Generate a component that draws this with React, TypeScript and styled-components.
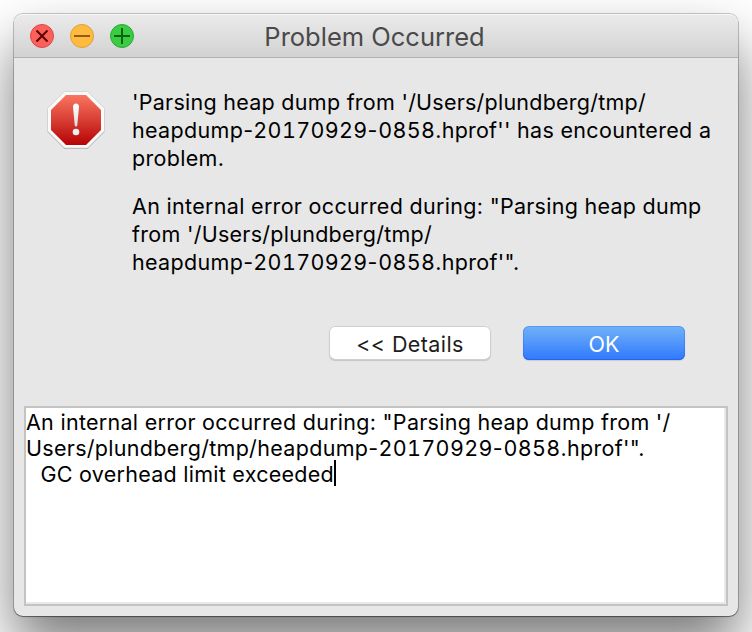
import React from "react";
import styled, { createGlobalStyle } from "styled-components";

const GlobalStyle = createGlobalStyle`
  * { box-sizing: border-box; }
  html, body { margin: 0; width: 752px; height: 632px; overflow: hidden; background: #fff; }
  body {
    font-family: Inter, "Liberation Sans", sans-serif;
    color: #000;
  }
`;

const Desktop = styled.main`
  width: 752px;
  height: 632px;
  padding: 14px;
  overflow: hidden;
`;

const Window = styled.section`
  display: flex;
  flex-direction: column;
  width: 724px;
  height: 602px;
  border-radius: 9px;
  background: #e7e7e7;
  box-shadow: 0 0 0 1px rgba(0, 0, 0, 0.2), 0 1px 1px rgba(0, 0, 0, 0.35),
    0 30px 56px rgba(0, 0, 0, 0.53);
`;

const TitleBar = styled.header`
  display: grid;
  grid-template-columns: 110px 1fr 110px;
  align-items: center;
  height: 44px;
  padding: 0 16px;
  border-radius: 9px 9px 0 0;
  border-bottom: 1px solid #b1b1b1;
  background: linear-gradient(#ebebeb, #d2d2d2);
  box-shadow: inset 0 1px 0 #f6f6f6;
`;

const Controls = styled.nav`
  display: flex;
  gap: 16px;
`;

const Control = styled.button<{ $fill: string; $edge: string; $ink: string }>`
  display: grid;
  place-items: center;
  width: 24px;
  height: 24px;
  padding: 0;
  border: 1px solid ${(p) => p.$edge};
  border-radius: 50%;
  background: ${(p) => p.$fill};
  color: ${(p) => p.$ink};
`;

const Glyph = styled.svg`
  width: 22px;
  height: 22px;
  fill: none;
  stroke: currentColor;
  stroke-width: 2;
`;

const Title = styled.h1`
  margin: 3px 3px 0 0;
  text-align: center;
  white-space: nowrap;
  font-size: 25.5px;
  line-height: 32px;
  font-weight: 400;
  color: #4a4a4a;
`;

const Message = styled.div`
  display: flex;
  align-items: flex-start;
  height: 268px;
  padding: 30px 0 0 32px;
`;

const Icon = styled.svg`
  flex: none;
  width: 60px;
  height: 62px;
  margin-top: 1px;
`;

const Copy = styled.div`
  display: flex;
  flex-direction: column;
  gap: 20px;
  margin-left: 26px;
`;

const Paragraph = styled.p<{ $leading: number }>`
  margin: 0;
  font-size: 21.5px;
  font-weight: 430;
  line-height: ${(p) => p.$leading}px;
`;

const Line = styled.span`
  display: block;
  width: max-content;
  white-space: pre;
`;

const Run = styled.span<{ $track: number }>`
  letter-spacing: ${(p) => p.$track}px;
`;

const Digits = styled(Run)`
  font-variant-numeric: tabular-nums;
`;

const Actions = styled.footer`
  display: flex;
  justify-content: flex-end;
  gap: 32px;
  height: 80px;
  padding-right: 53px;
`;

const Button = styled.button<{ $primary?: boolean }>`
  width: 162px;
  height: 34px;
  padding: 2px 0 0;
  border: 0;
  border-radius: 6px;
  font: 400 21.5px/32px Inter, sans-serif;
  letter-spacing: ${(p) => (p.$primary ? 0 : 0.4)}px;
  color: ${(p) => (p.$primary ? "#fff" : "#1c1c1c")};
  background: ${(p) => (p.$primary ? "linear-gradient(#72b2f8, #2f79fd)" : "#fff")};
  box-shadow: ${(p) =>
    p.$primary
      ? "inset 0 0 0 1px rgba(40,100,240,.35), inset 0 -1px 0 #2a62f0, 0 1px 1px rgba(0,0,0,.12)"
      : "inset 0 0 0 1px #cfcfcf, inset 0 -1px 0 #b4b4b4, 0 1px 1px rgba(0,0,0,.14)"};
`;

const Details = styled.section`
  width: 704px;
  height: 200px;
  margin-left: 10px;
  padding-top: 1px;
  border: 2px solid #c3c3c3;
  background: #fff;
  box-shadow: inset -2px -2px 0 #e9e9e9;
`;

const Caret = styled.i`
  display: inline-block;
  width: 2px;
  height: 26px;
  margin-top: -1px;
  vertical-align: top;
  background: #000;
`;

const DumpName = () => (
  <>
    <Run $track={0.32}>heapdump-</Run>
    <Digits $track={0.33}>20170929</Digits>
    <Run $track={0.8}>-</Run>
    <Digits $track={0.33}>0858</Digits>
  </>
);

export default function App() {
  return (
    <>
      <GlobalStyle />
      <Desktop>
        <Window>
          <TitleBar>
            <Controls>
              <Control $fill="#fc605b" $edge="#df4744" $ink="#5d0503" aria-label="Close">
                <Glyph viewBox="0 0 22 22"><path d="M5.5 5.5l11 11M16.5 5.5l-11 11" /></Glyph>
              </Control>
              <Control $fill="#fdbc40" $edge="#dea034" $ink="#985712" aria-label="Minimize">
                <Glyph viewBox="0 0 22 22"><path d="M3 11h16" /></Glyph>
              </Control>
              <Control $fill="#3bcb44" $edge="#27aa35" $ink="#0b650d" aria-label="Zoom">
                <Glyph viewBox="0 0 22 22"><path d="M3 11h16M11 3v16" /></Glyph>
              </Control>
            </Controls>
            <Title>Problem Occurred</Title>
          </TitleBar>
          <Message>
            <Icon viewBox="0 0 60 62">
              <defs>
                <linearGradient id="red" x1="0" y1="0" x2="0" y2="1">
                  <stop stopColor="#fa7561" />
                  <stop offset=".5" stopColor="#d83e33" />
                  <stop offset="1" stopColor="#b60206" />
                </linearGradient>
                <linearGradient id="mark" x1="0" y1="0" x2="0" y2="1">
                  <stop stopColor="#fff" />
                  <stop offset="1" stopColor="#dedede" />
                </linearGradient>
              </defs>
              <path d="M18.5 4h23l17 17v22l-17 17h-23l-17-17v-22z" fill="#999" opacity=".75" />
              <path d="M18.5 2.5h23l17 17v22.5l-17 17h-23l-17-17v-22.5z" fill="#fafafa" stroke="#cfcfcf" strokeWidth=".8" />
              <path d="M20 6h20l15 15v20L40 56H20L5 41V21z" fill="url(#red)" />
              <path d="M27 18q0-3.5 3-3.5t3 3.5l-1.7 18q-.2 1.6-1.3 1.6t-1.3-1.6z" fill="url(#mark)" />
              <circle cx="30" cy="43" r="3.3" fill="#eee" />
            </Icon>
            <Copy>
              <Paragraph $leading={28}>
                <Line>
                  <Run $track={0.27}>{"'Parsing heap dump from "}</Run>
                  <Run $track={0.23}>{"'/Users/plundberg/tmp/"}</Run>
                </Line>
                <Line>
                  <DumpName />
                  <Run $track={0.22}>{".hprof''"}</Run>
                  <Run $track={0.32}>{" has encountered a"}</Run>
                </Line>
                <Line><Run $track={0.3}>problem.</Run></Line>
              </Paragraph>
              <Paragraph $leading={28}>
                <Line>
                  <Run $track={0.31}>{"An internal error occurred during: "}</Run>
                  <Run $track={0.27}>{'"Parsing heap dump'}</Run>
                </Line>
                <Line>
                  <Run $track={0.3}>{"from "}</Run>
                  <Run $track={0.26}>{"'/Users/plundberg/tmp/"}</Run>
                </Line>
                <Line>
                  <DumpName />
                  <Run $track={0.3}>{".hprof'\"."}</Run>
                </Line>
              </Paragraph>
            </Copy>
          </Message>
          <Actions>
            <Button>{"<< Details"}</Button>
            <Button $primary>OK</Button>
          </Actions>
          <Details>
            <Paragraph $leading={26}>
              <Line>
                <Run $track={0.28}>{"An internal error occurred during: \"Parsing heap dump from '/"}</Run>
              </Line>
              <Line>
                <Run $track={0.3}>Users/plundberg/tmp/</Run>
                <DumpName />
                <Run $track={0.3}>{".hprof'\"."}</Run>
              </Line>
              <Line>
                <Run $track={1.2}>{"  "}</Run>
                <Run $track={0.26}>GC overhead limit exceeded</Run>
                <Caret />
              </Line>
            </Paragraph>
          </Details>
        </Window>
      </Desktop>
    </>
  );
}
